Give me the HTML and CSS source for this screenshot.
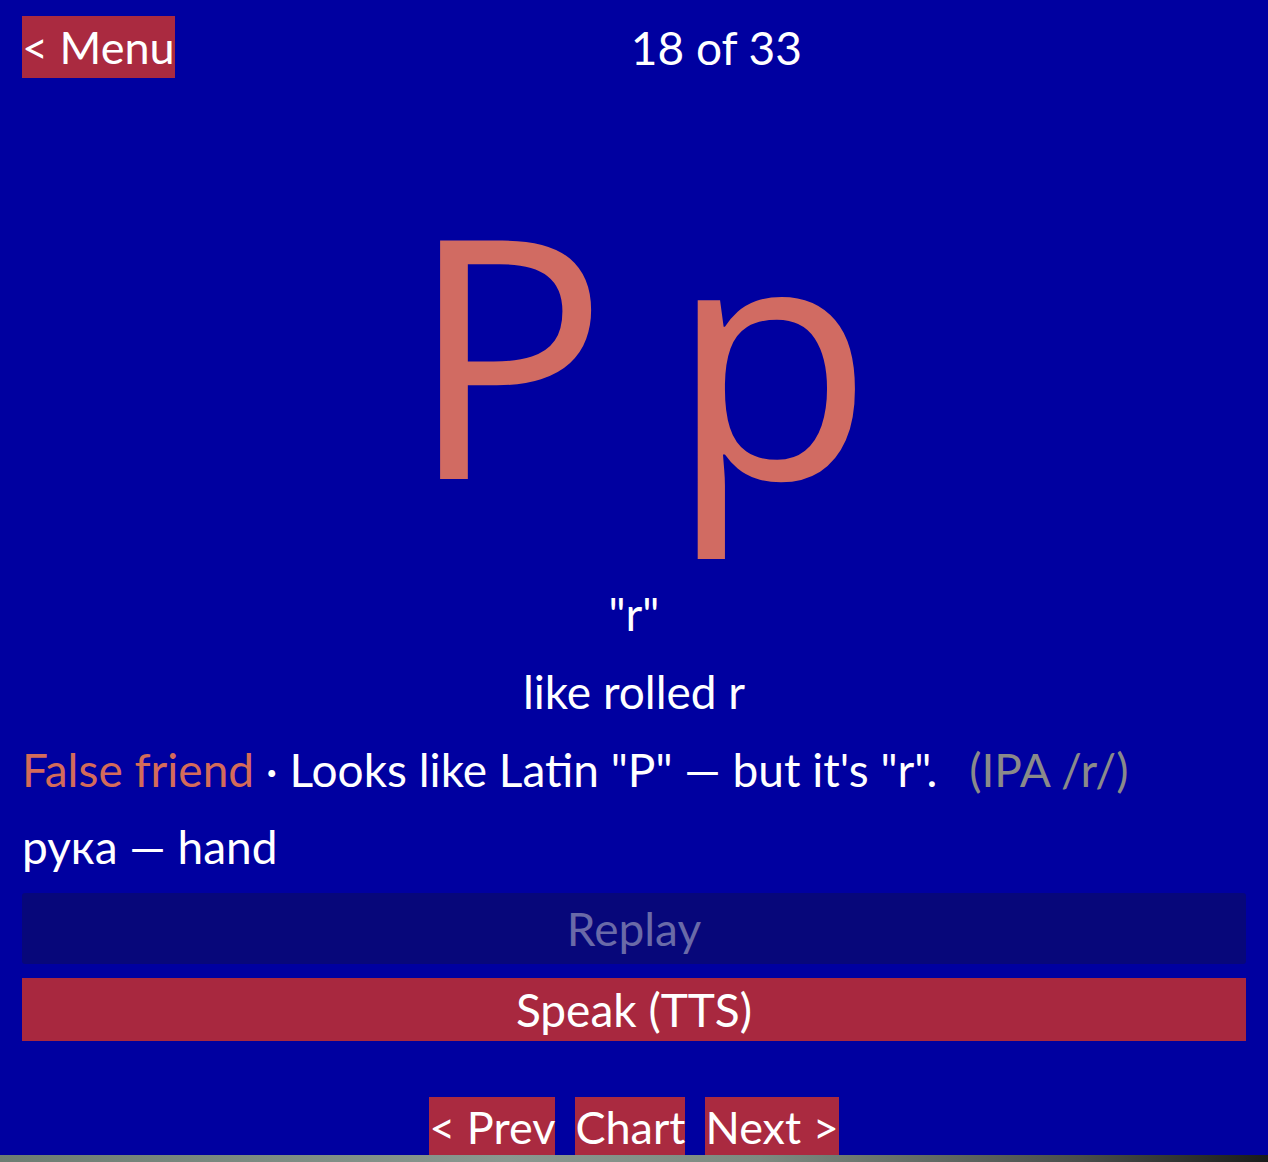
FILE: index.html
```html
<!DOCTYPE html>
<html lang="en">
	<head>
		<meta charset="utf-8" />
		<title>Cyrillic Letters</title>
		<link rel="stylesheet" href="styles.css">
	</head>
	<body>
		<div id="app">
			<div class="topbar">
				<button class="btn menu-btn">&lt; Menu</button>
				<div class="counter">18 of 33</div>
			</div>
			<div class="letter">Р р</div>
			<div class="translit">"r"</div>
			<div class="sound">like rolled r</div>
			<div class="note">
				<span class="tag">False friend</span> · Looks like Latin "P" — but it's "r".
				<span class="ipa">(IPA /r/)</span>
			</div>
			<div class="example">рука — hand</div>
			<button class="wide replay" disabled>Replay</button>
			<button class="wide speak">Speak (TTS)</button>
			<div class="nav">
				<button class="btn">&lt; Prev</button>
				<button class="btn">Chart</button>
				<button class="btn">Next &gt;</button>
			</div>
		</div>
		<div class="ground"></div>
	</body>
</html>
```

FILE: styles.css
```css
html,
body {
	margin: 0;
	padding: 0;
}
body {
	font-family: Lato, "Noto Sans", sans-serif;
	background-color: #0000a0;
	color: #fff;
	height: 1162px;
	overflow: hidden;
	display: flex;
	flex-direction: column;
}
#app {
	flex: 1;
	min-height: 0;
	overflow: hidden;
	padding: 16px 22px 0 22px;
	display: flex;
	flex-direction: column;
}
#app > * {
	flex-shrink: 0;
}
button {
	font-family: inherit;
	color: #fff;
	border: none;
	cursor: pointer;
}
.btn {
	background-color: #aa2a40;
	font-size: 45px;
	line-height: 62px;
	padding: 0;
}
.topbar {
	display: flex;
	align-items: center;
}
.counter {
	flex: 1;
	text-align: center;
	font-size: 46px;
	padding-left: 12px;
}
.letter {
	font-family: "Open Sans", sans-serif;
	color: #d16b62;
	font-size: 334px;
	line-height: 1;
	letter-spacing: -13px;
	text-align: center;
	margin-top: 105px;
	height: 392px;
	white-space: pre;
}
.translit,
.sound {
	text-align: center;
	font-size: 46px;
	line-height: 78px;
}
.note,
.example {
	font-size: 46px;
	line-height: 77px;
}
.tag {
	color: #d46b5a;
}
.ipa {
	color: #8a8a8a;
	margin-left: 20px;
}
.wide {
	font-size: 46px;
	height: 71px;
	width: 100%;
	margin-top: 8px;
}
.replay {
	background-color: #07077a;
	color: #6a6aa8;
	border-radius: 3px;
}
.speak {
	background-color: #a8283f;
	height: 63px;
	margin-top: 14px;
}
.nav {
	display: flex;
	justify-content: center;
	gap: 20px;
	margin-top: 56px;
}
.nav .btn {
	height: 59px;
	line-height: 60px;
}
.ground {
	height: 7px;
	flex-shrink: 0;
	background: linear-gradient(to right, #6d7d72, #8a9890 40%, #7d8a80 60%, #4a4f4c 85%, #1a1c1b);
}
```
